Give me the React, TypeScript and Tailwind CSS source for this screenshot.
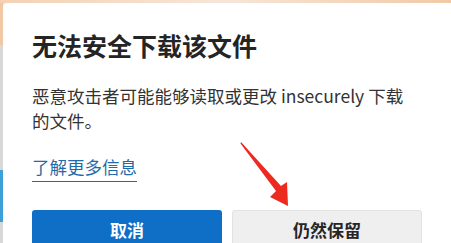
import React from "react";

const FONT = '"Microsoft YaHei", "Noto Sans CJK SC", "Noto Sans", sans-serif';

function RedArrow() {
  return (
    <svg className="pointer-events-none absolute left-0 top-0" width="451" height="243" viewBox="0 0 451 243">
      <path d="M241 142 L281 186 L287 182 L288 206 L270 197 L276 191 L240.5 143.5 Z" fill="#ec2a20" />
    </svg>
  );
}

export default function App() {
  return (
    <div className="relative h-[243px] w-[451px] overflow-hidden bg-[#dcdcdc]" style={{ fontFamily: FONT }}>
      <div className="h-[3px] w-full bg-gradient-to-r from-[#f3d2b4] via-[#f6e6d8] to-[#f1c9a6]" />
      <div className="flex h-[240px]">
        <div className="flex w-[3px] flex-col">
          <div className="h-[42px] bg-[#f0c9a4]" />
          <div className="h-[125px] bg-[#d8d8d8]" />
          <div className="h-[52px] bg-[#3ea0d8]" />
          <div className="flex-1 bg-[#d8d8d8]" />
        </div>
        <div className="flex-1 rounded-tl-[4px] bg-white pl-[29px] pt-[25px]">
          <h1 className="text-[25px] font-bold leading-[34px] text-[#242424]">无法安全下载该文件</h1>
          <p className="mt-[21px] w-[380px] text-[17.5px] leading-[25px] text-[#333333]">
            恶意攻击者可能能够读取或更改 insecurely 下载的文件。
          </p>
          <div className="mt-[22px]">
            <a className="border-b-[1.5px] border-[#1f6aa8] pb-[2px] text-[17.5px] leading-[24px] text-[#1f6aa8]">了解更多信息</a>
          </div>
          <div className="mt-[31px] flex gap-[10px]">
            <button className="flex h-[40px] w-[190px] items-center justify-center rounded-[3px] bg-[#0f6fc6] text-[17px] font-bold text-white">
              取消
            </button>
            <button className="flex h-[40px] w-[190px] items-center justify-center rounded-[3px] border border-[#e2e2e2] bg-[#efefef] text-[17px] font-bold text-[#262626]">
              仍然保留
            </button>
          </div>
        </div>
      </div>
      <RedArrow />
    </div>
  );
}
